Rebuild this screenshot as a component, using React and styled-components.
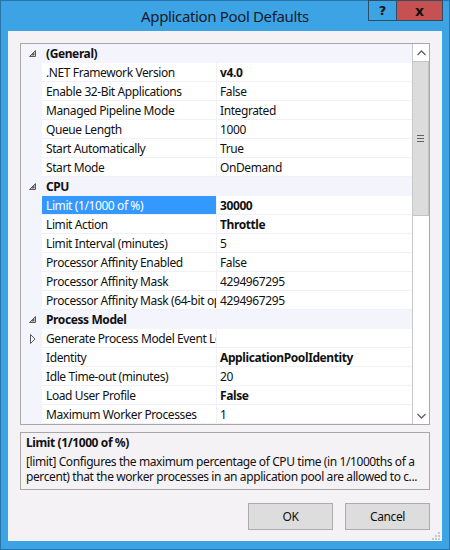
import styled, { createGlobalStyle } from 'styled-components'

const GlobalStyle = createGlobalStyle`
  html, body {
    margin: 0;
    padding: 0;
    background: #fff;
  }
  * {
    box-sizing: border-box;
  }
`

const font = `"Noto Sans", "Open Sans", "Liberation Sans", sans-serif`

const Window = styled.div`
  position: relative;
  width: 450px;
  height: 550px;
  display: flex;
  flex-direction: column;
  background: #3ca4e4;
  border: 1px solid #2a73a6;
  font-family: ${font};
  font-size: 12px;
  letter-spacing: -0.4px;
  color: #111;
`

const TitleBar = styled.div`
  position: relative;
  height: 30px;
  flex: none;
  display: flex;
  align-items: center;
  justify-content: center;
  padding-bottom: 1px;
`

const Title = styled.div`
  font-size: 15px;
  color: #1a1a2a;
  letter-spacing: -0.35px;
`

const CaptionButtons = styled.div`
  position: absolute;
  top: -1px;
  right: 6px;
  display: flex;
`

const CaptionButton = styled.div`
  width: ${p => p.$w}px;
  height: 21px;
  display: flex;
  align-items: center;
  justify-content: center;
  background: ${p => (p.$close ? '#c75050' : '#3ca4e4')};
  border: 1px solid #2e4e63;
  margin-left: -1px;
  font-family: "DejaVu Sans", sans-serif;
  font-weight: bold;
  font-size: ${p => (p.$close ? 14 : 13)}px;
  letter-spacing: 0;
  color: #111;
`

const Body = styled.div`
  flex: 1;
  margin: 0 7px 8px 7px;
  background: #f5f2f5;
  padding: 12px 12px 0 12px;
  display: flex;
  flex-direction: column;
`

const Grid = styled.div`
  height: 382px;
  flex: none;
  display: flex;
  border: 1px solid #a8a8a8;
  background: #f4f4fc;
  overflow: hidden;
`

const Rows = styled.div`
  flex: 1;
  display: flex;
  flex-direction: column;
  overflow: hidden;
`

const Row = styled.div`
  display: grid;
  grid-template-columns: 21px 175px 1fr;
  height: 19px;
  flex: none;
`

const Margin = styled.div`
  display: flex;
  align-items: center;
  justify-content: center;
  padding-left: ${p => (p.$expander ? 3 : 2)}px;
`

const NameCell = styled.div`
  display: flex;
  align-items: center;
  padding-left: 4px;
  background: ${p => (p.$selected ? '#3399ff' : '#fff')};
  color: ${p => (p.$selected ? '#fff' : 'inherit')};
  border-right: 1px solid #f0f0f8;
  border-bottom: 1px solid #f0f0f8;
  white-space: nowrap;
  overflow: hidden;
`

const ValueCell = styled.div`
  display: flex;
  align-items: center;
  padding-left: 3px;
  background: #fff;
  border-bottom: 1px solid #f0f0f8;
  font-weight: ${p => (p.$bold ? 'bold' : 'normal')};
  white-space: nowrap;
  overflow: hidden;
`

const CategoryName = styled.div`
  display: flex;
  align-items: center;
  padding-left: 4px;
  font-weight: bold;
  grid-column: 2 / 4;
`

const Scrollbar = styled.div`
  width: 17px;
  flex: none;
  display: flex;
  flex-direction: column;
  background: #fff;
  border-left: 1px solid #c8c8c8;
`

const ArrowButton = styled.div`
  height: 17px;
  flex: none;
  display: flex;
  align-items: center;
  justify-content: center;
  background: #fff;
`

const Thumb = styled.div`
  height: 155px;
  flex: none;
  display: flex;
  align-items: center;
  justify-content: center;
  background: #dcdcdc;
  border: 1px solid #c4c4c4;
  border-left: none;
`

const Track = styled.div`
  flex: 1;
`

const Description = styled.div`
  margin-top: 7px;
  height: 58px;
  flex: none;
  border: 1px solid #a8a8a8;
  padding: 2px 5px 0 5px;
  line-height: 15px;
`

const DescTitle = styled.div`
  font-weight: bold;
  margin-bottom: 4px;
`

const DescLine = styled.div`
  white-space: nowrap;
  overflow: hidden;
`

const Footer = styled.div`
  margin-top: 13px;
  display: flex;
  justify-content: flex-end;
  gap: 12px;
`

const Button = styled.div`
  width: 85px;
  height: 27px;
  display: flex;
  align-items: center;
  justify-content: center;
  background: #dddddd;
  border: 1px solid #acacac;
`

const Grip = styled.svg`
  position: absolute;
  right: 9px;
  bottom: 9px;
`

const CollapseIcon = () => (
  <svg width="7" height="7" viewBox="0 0 7 7">
    <polygon points="0.5,6.5 6.5,6.5 6.5,0.5" fill="#fff" stroke="#595959" />
    <polygon points="2,5.5 5.5,5.5 5.5,2" fill="#595959" />
  </svg>
)

const ExpandIcon = () => (
  <svg width="6" height="10" viewBox="0 0 6 10">
    <polygon points="0.5,0.5 5,5 0.5,9.5" fill="none" stroke="#5a5a5a" />
  </svg>
)

const Chevron = ({ up }) => (
  <svg width="9" height="6" viewBox="0 0 9 6">
    <polyline
      points={up ? '0.5,5 4.5,1 8.5,5' : '0.5,1 4.5,5 8.5,1'}
      fill="none"
      stroke="#606060"
      strokeWidth="1.3"
    />
  </svg>
)

const Gripper = () => (
  <svg width="7" height="7" viewBox="0 0 7 7">
    <rect x="0" y="0" width="7" height="1" fill="#606060" />
    <rect x="0" y="3" width="7" height="1" fill="#606060" />
    <rect x="0" y="6" width="7" height="1" fill="#606060" />
  </svg>
)

const sections = [
  {
    name: '(General)',
    items: [
      { name: '.NET Framework Version', value: 'v4.0', bold: true },
      { name: 'Enable 32-Bit Applications', value: 'False' },
      { name: 'Managed Pipeline Mode', value: 'Integrated' },
      { name: 'Queue Length', value: '1000' },
      { name: 'Start Automatically', value: 'True' },
      { name: 'Start Mode', value: 'OnDemand' },
    ],
  },
  {
    name: 'CPU',
    items: [
      { name: 'Limit (1/1000 of %)', value: '30000', bold: true, selected: true },
      { name: 'Limit Action', value: 'Throttle', bold: true },
      { name: 'Limit Interval (minutes)', value: '5' },
      { name: 'Processor Affinity Enabled', value: 'False' },
      { name: 'Processor Affinity Mask', value: '4294967295' },
      { name: 'Processor Affinity Mask (64-bit option)', value: '4294967295' },
    ],
  },
  {
    name: 'Process Model',
    items: [
      { name: 'Generate Process Model Event Log Entry', value: '', expandable: true },
      { name: 'Identity', value: 'ApplicationPoolIdentity', bold: true },
      { name: 'Idle Time-out (minutes)', value: '20' },
      { name: 'Load User Profile', value: 'False', bold: true },
      { name: 'Maximum Worker Processes', value: '1' },
    ],
  },
]

const App = () => (
  <>
    <GlobalStyle />
    <Window>
      <TitleBar>
        <Title>Application Pool Defaults</Title>
        <CaptionButtons>
          <CaptionButton $w={29}>?</CaptionButton>
          <CaptionButton $w={47} $close>
            x
          </CaptionButton>
        </CaptionButtons>
      </TitleBar>
      <Body>
        <Grid>
          <Rows>
            {sections.map(s => (
              <div key={s.name}>
                <Row>
                  <Margin>
                    <CollapseIcon />
                  </Margin>
                  <CategoryName>{s.name}</CategoryName>
                </Row>
                {s.items.map(it => (
                  <Row key={it.name}>
                    <Margin $expander>{it.expandable && <ExpandIcon />}</Margin>
                    <NameCell $selected={it.selected}>{it.name}</NameCell>
                    <ValueCell $bold={it.bold}>{it.value}</ValueCell>
                  </Row>
                ))}
              </div>
            ))}
          </Rows>
          <Scrollbar>
            <ArrowButton>
              <Chevron up />
            </ArrowButton>
            <Thumb>
              <Gripper />
            </Thumb>
            <Track />
            <ArrowButton>
              <Chevron />
            </ArrowButton>
          </Scrollbar>
        </Grid>
        <Description>
          <DescTitle>Limit (1/1000 of %)</DescTitle>
          <DescLine>
            [limit] Configures the maximum percentage of CPU time (in 1/1000ths of a
          </DescLine>
          <DescLine>
            percent) that the worker processes in an application pool are allowed to c...
          </DescLine>
        </Description>
        <Footer>
          <Button>OK</Button>
          <Button>Cancel</Button>
        </Footer>
      </Body>
      <Grip width="8" height="8" viewBox="0 0 8 8">
        <rect x="6" y="0" width="2" height="2" fill="#c8c8c8" />
        <rect x="3" y="3" width="2" height="2" fill="#c8c8c8" />
        <rect x="6" y="3" width="2" height="2" fill="#c8c8c8" />
        <rect x="0" y="6" width="2" height="2" fill="#c8c8c8" />
        <rect x="3" y="6" width="2" height="2" fill="#c8c8c8" />
        <rect x="6" y="6" width="2" height="2" fill="#c8c8c8" />
      </Grip>
    </Window>
  </>
)

export default App
